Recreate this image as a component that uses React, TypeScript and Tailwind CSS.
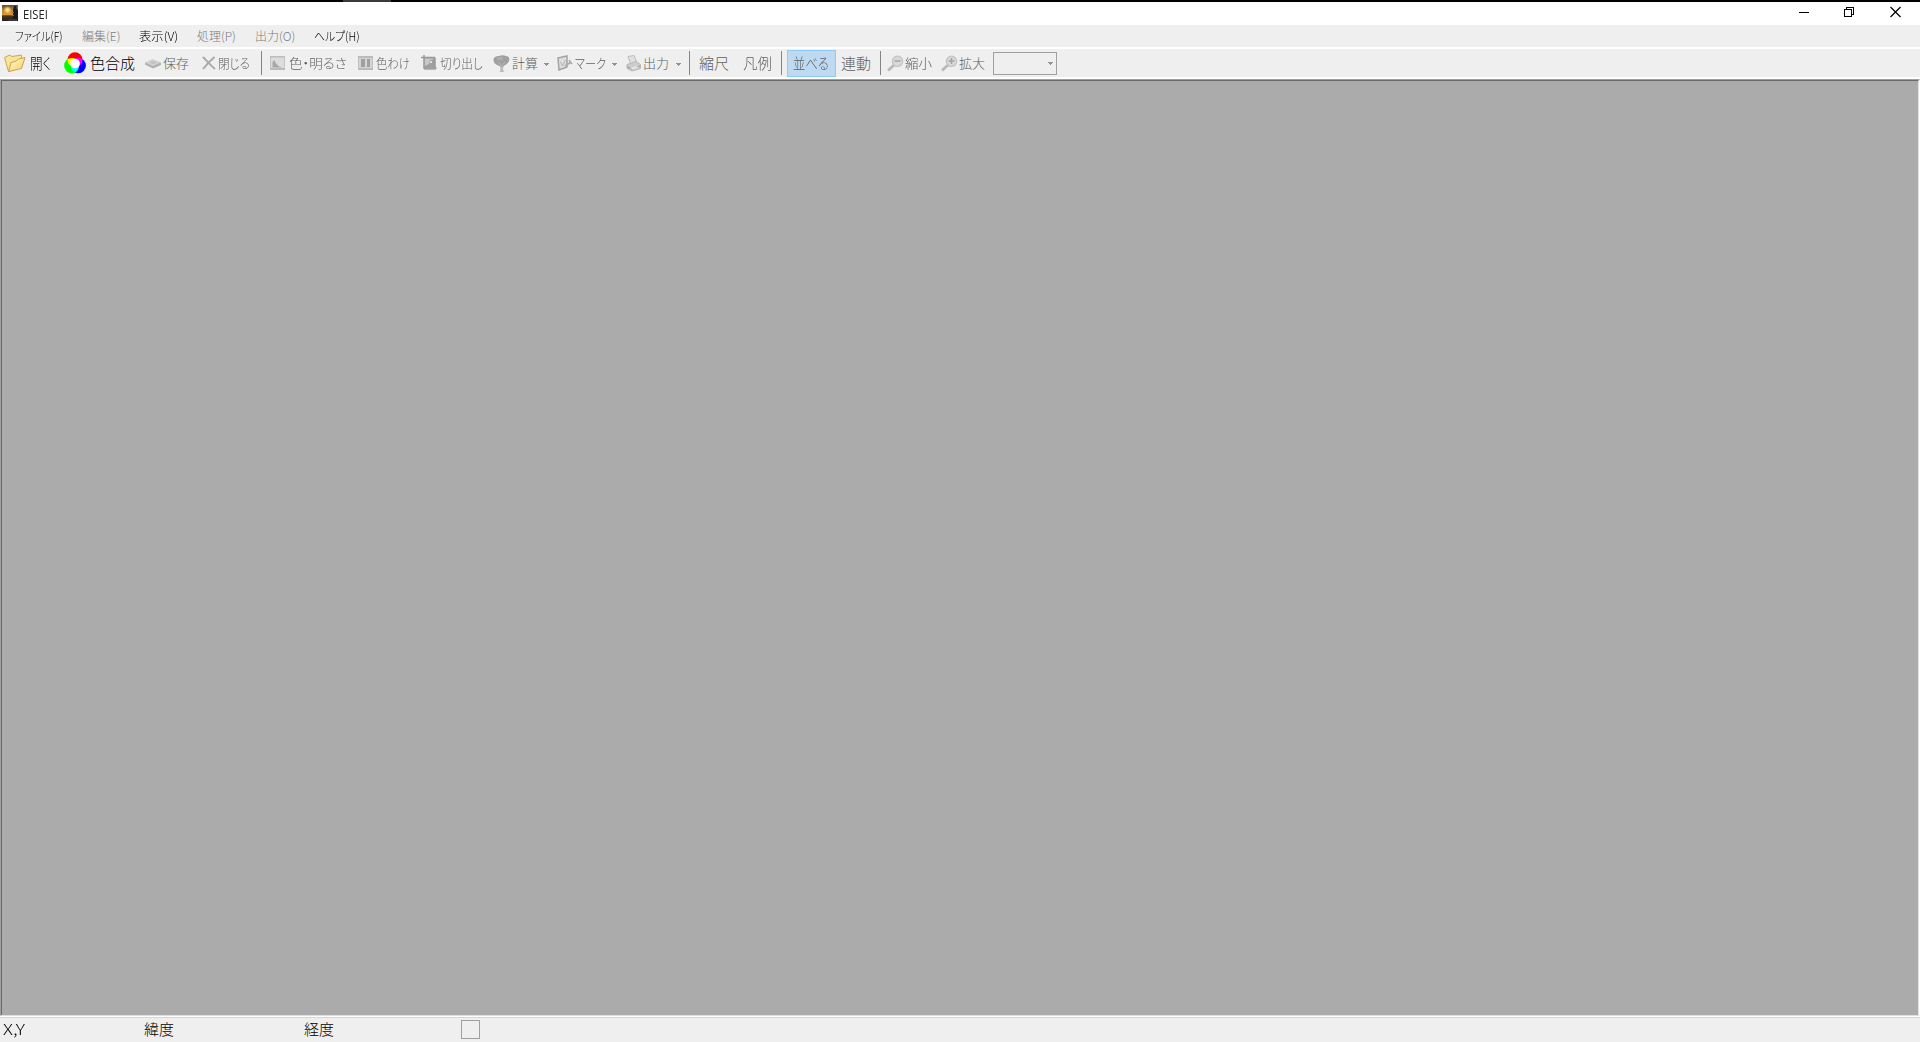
import React, { useLayoutEffect, useRef, useState } from "react";

type FitTextProps = { text: string; className: string };

// Condenses proportional kana so that a label fills its own box exactly.
const FitText = ({ text, className }: FitTextProps) => {
  const ref = useRef<HTMLSpanElement>(null);
  const [scale, setScale] = useState(1);

  useLayoutEffect(() => {
    const el = ref.current;
    if (el && el.parentElement) {
      setScale(el.parentElement.clientWidth / el.offsetWidth);
    }
  }, [text]);

  return (
    <span className={`block shrink-0 whitespace-nowrap ${className}`}>
      <span ref={ref} className="inline-block origin-left" style={{ transform: `scaleX(${scale})` }}>
        {text}
      </span>
    </span>
  );
};

const AppIcon = () => (
  <svg width="16" height="16" viewBox="0 0 16 16">
    <defs>
      <linearGradient id="sky" x1="0" y1="0" x2="0" y2="1">
        <stop offset="0" stopColor="#5a4a38" />
        <stop offset=".35" stopColor="#c08a3c" />
        <stop offset=".6" stopColor="#d9983a" />
        <stop offset=".68" stopColor="#4a3420" />
        <stop offset="1" stopColor="#2a2018" />
      </linearGradient>
      <radialGradient id="sun">
        <stop offset="0" stopColor="#fff6c0" />
        <stop offset=".4" stopColor="#f8cf62" />
        <stop offset="1" stopColor="#f8cf62" stopOpacity="0" />
      </radialGradient>
    </defs>
    <path fill="url(#sky)" d="M0 0h16v16H0z" />
    <circle cx="5.500" cy="5" r="4" fill="url(#sun)" />
    <path fill="#1c1a1c" d="M12 1h2l1 3 1 1v11H8l1-2 2-1V5z" />
    <path fill="#33384a" d="M7 14h8v2H6z" />
    <path fill="#8a6436" d="M10 7h2v1h-2zM10 10h2v1h-2z" />
  </svg>
);

const FolderIcon = () => (
  <svg width="22" height="20" viewBox="0 0 22 20">
    <defs>
      <linearGradient id="folder" x1="0" y1="0" x2="1" y2="1">
        <stop offset="0" stopColor="#fffbd0" />
        <stop offset="1" stopColor="#f4d068" />
      </linearGradient>
    </defs>
    <path fill="#f7e39a" stroke="#d0a850" d="M.5 4.500l5-2.500 2.500 1.500 9.500-1.500v4l-2 9-11 3.500z" />
    <path fill="url(#folder)" stroke="#cda348" d="M4.500 18.500L7 9.500l5.500-1.500 2-2 6.500-1.500-3.500 11z" />
  </svg>
);

const RgbIcon = () => (
  <svg width="22" height="22" viewBox="0 0 22 22">
    <g className="isolate">
      <circle cx="11" cy="7.700" r="7.500" fill="#f00" />
      <circle cx="7.700" cy="13.600" r="7.600" fill="#0f0" className="mix-blend-screen" />
      <circle cx="14.300" cy="13.600" r="7.600" fill="#00f" className="mix-blend-screen" />
    </g>
    <circle cx="11" cy="11.500" r="4.800" fill="#fff" />
  </svg>
);

const DiskIcon = () => (
  <svg width="16" height="11" viewBox="0 0 16 11">
    <path fill="#b0b0b0" d="M0 4.500v2L8 10.500l8-3.500V4.500z" />
    <path fill="#d2d2d2" d="M0 4.500L7.500 1 16 4.200 8 8z" />
    <path fill="#c0c0c0" d="M4 4.500L8 3l4 1.400L8 6z" />
  </svg>
);

const CrossIcon = () => (
  <svg width="14" height="14" viewBox="0 0 14 14">
    <path stroke="#aaa" strokeWidth="2" fill="none" d="M1 1c3 3 7 8 12 12M12.500 1C9 4 5 8 1 13" />
  </svg>
);

const HistogramIcon = () => (
  <svg width="15" height="14" viewBox="0 0 15 14">
    <path fill="#dcdcdc" stroke="#c4c4c4" d="M.5.5h14v13H.5z" />
    <path fill="#bcbcbc" d="M0 0h15v1.500H0zM0 12h15v2H0z" />
    <path fill="#a8a8a8" d="M2.500 11.500V6l2-2c1 4 4 7 8.500 7.500z" />
  </svg>
);

const ClassesIcon = () => (
  <svg width="15" height="14" viewBox="0 0 15 14">
    <path fill="#d4d4d4" stroke="#c0c0c0" d="M.5.5h14v13H.5z" />
    <path fill="#bbb" d="M0 0h15v2H0zM0 12h15v2H0z" />
    <path fill="#a0a0a0" d="M3 3h4v8H3zM9 3h3v8H9z" />
  </svg>
);

const CropIcon = () => (
  <svg width="16" height="16" viewBox="0 0 16 16">
    <path fill="#b9b9b9" d="M3 3h12v12H3z" />
    <path fill="#c8c8c8" d="M4 4h8v7H4z" />
    <path fill="#a0a0a0" d="M4 11l4-2 1-4 4-1v8H4z" />
    <path stroke="#999" strokeWidth="1.500" fill="none" d="M0 2.500h13.500V13M3 0v13h12.500" />
    <path fill="#dedede" d="M9 6h2v2H9z" />
  </svg>
);

const TreeIcon = () => (
  <svg width="17" height="17" viewBox="0 0 17 17">
    <path fill="#bdbdbd" d="M6.500 7h4.500l-1 8 1.500 2h-5L7.500 15z" />
    <path fill="#a0a0a0" d="M.5 5C.5 2 3 1 6 1c2-1 5-1 7 0 3 0 4 3 3 5s-3 4-5.500 5l-2 1-2-1C3 10 .5 8 .5 5z" />
    <path stroke="#b8b8b8" d="M6 7l2.500 4L12 7" fill="none" />
    <path fill="#adadad" d="M4 2h6v3H4z" />
  </svg>
);

const MarkIcon = () => (
  <svg width="16" height="16" viewBox="0 0 16 16">
    <path fill="#dedede" stroke="#a4a4a4" strokeWidth="1.500" d="M1 3l9-2v11l-8 3z" />
    <path stroke="#b4b4b4" fill="none" d="M3.500 7l2 4 3-6" />
    <path stroke="#acacac" strokeWidth="2" d="M8 11l6-4" />
    <path stroke="#acacac" strokeWidth="1.500" d="M12 5l3 4" />
  </svg>
);

const PrinterIcon = () => (
  <svg width="15" height="17" viewBox="0 0 15 17">
    <path fill="#e0e0e0" stroke="#bdbdbd" d="M2 1.500l6-1 3 7-6 2z" />
    <path fill="#cdcdcd" stroke="#b8b8b8" d="M1 9.500l9-3 4.500 3v4L6 16l-5-2.500z" />
    <path fill="#a6a6a6" d="M1 11l5 2 8-2.500v1.500L6 14.500l-5-2z" />
    <path fill="#e4e4e4" d="M4 13l6-2 3 1.500-6 2z" />
  </svg>
);

const LensIcon = ({ plus }: { plus?: boolean }) => (
  <svg width="17" height="17" viewBox="0 0 17 17">
    <path stroke="#b8b8b8" strokeWidth="2.800" d="M1 15.500l6-5.500" />
    <circle cx="10.500" cy="6.300" r="5.200" fill="#d8d8d8" stroke="#c2c2c2" strokeWidth="1.200" />
    <path stroke="#a4a4a4" strokeWidth="1.500" d={plus ? "M7.500 6h6M10.500 3v6" : "M7.500 6h6"} />
  </svg>
);

const Arrow = ({ className }: { className: string }) => (
  <svg width="5" height="3" viewBox="0 0 5 3" shapeRendering="crispEdges" className={`shrink-0 ${className}`}>
    <path fill="#929292" d="M0 0h5v1H4v1H3v1H2V2H1V1H0z" />
  </svg>
);

const Separator = ({ className }: { className: string }) => (
  <div className={`h-6 w-px shrink-0 bg-[#858585] ${className}`} />
);

type ToolProps = { icon?: React.ReactNode; className: string; iconClass?: string; text: string; textClass: string };

const Tool = ({ icon, className, iconClass = "", text, textClass }: ToolProps) => (
  <div className={`flex shrink-0 items-center ${className}`}>
    {icon && <div className={`shrink-0 ${iconClass}`}>{icon}</div>}
    <FitText text={text} className={textClass} />
  </div>
);

const menus = [
  { text: "ファイル(F)", className: "ml-[15px] w-12 text-black" },
  { text: "編集(E)", className: "ml-[19px] w-[38px] text-[#7c7c7c]" },
  { text: "表示(V)", className: "ml-[19px] w-[39px] text-black" },
  { text: "処理(P)", className: "ml-[19px] w-[39px] text-[#7c7c7c]" },
  { text: "出力(O)", className: "ml-[19px] w-10 text-[#7c7c7c]" },
  { text: "ヘルプ(H)", className: "ml-[19px] w-[46px] text-black" },
];

const App = () => {
  return (
    <div className="flex h-[1042px] w-[1920px] flex-col overflow-hidden bg-[#efefef] font-['Noto_Sans_CJK_JP',sans-serif] font-light">
      <div className="h-0.5 shrink-0 bg-black">
        <div className="ml-[343px] h-0.5 w-12 bg-[#3a3a3a]" />
      </div>

      <header className="flex h-[23px] shrink-0 items-start bg-white">
        <div className="ml-0.5 mt-[3px]">
          <AppIcon />
        </div>
        <FitText text="EISEI" className="ml-[5px] mt-1 w-[25px] font-['Open_Sans',sans-serif] text-[13px] font-normal leading-4 text-[#222]" />
        <svg width="103" height="12" viewBox="0 0 103 12" className="ml-auto mr-[18px] mt-1" fill="none" stroke="#000">
          <path d="M0 6.500h10M45.500 3.500h7v7h-7zM47.500 3V1.500h7v7H53" shapeRendering="crispEdges" />
          <path d="M91.500 1l10 10M101.500 1l-10 10" strokeWidth="1.200" />
        </svg>
      </header>

      <nav className="flex h-[22px] shrink-0 items-center text-xs leading-4 [font-feature-settings:'palt']">
        {menus.map((menu) => (
          <FitText key={menu.text} text={menu.text} className={menu.className} />
        ))}
      </nav>
      <div className="h-0.5 shrink-0 bg-white" />

      <div className="flex h-7 shrink-0 items-center text-[13px] leading-5 text-[#606060] [font-feature-settings:'palt']">
        <Tool icon={<FolderIcon />} className="ml-1 w-[60px]" iconClass="w-[26px]" text="開く" textClass="w-[21px] text-[15px] text-black" />
        <Tool icon={<RgbIcon />} className="w-[81px]" iconClass="w-[26px]" text="色合成" textClass="w-[45px] text-[15px] text-black" />
        <Tool icon={<DiskIcon />} className="w-[57px]" iconClass="w-[18px]" text="保存" textClass="w-[26px]" />
        <Tool icon={<CrossIcon />} className="w-[59px]" iconClass="w-[16px]" text="閉じる" textClass="w-8" />
        <Separator className="" />
        <Tool icon={<HistogramIcon />} className="ml-2 w-[88px]" iconClass="w-[19px]" text="色・明るさ" textClass="w-[58px]" />
        <Tool icon={<ClassesIcon />} className="w-[63px]" iconClass="w-[18px]" text="色わけ" textClass="w-[34px]" />
        <Tool icon={<CropIcon />} className="w-[72px]" iconClass="w-[19px]" text="切り出し" textClass="w-[43px]" />
        <Tool icon={<TreeIcon />} className="w-[45px]" iconClass="w-[19px]" text="計算" textClass="w-[26px]" />
        <Arrow className="ml-1.5 mt-0.5" />
        <Tool icon={<MarkIcon />} className="ml-2 w-[50px]" iconClass="w-[18px]" text="マーク" textClass="w-[31px]" />
        <Arrow className="ml-[5px] mt-0.5" />
        <Tool icon={<PrinterIcon />} className="ml-[9px] w-[44px]" iconClass="w-[17px]" text="出力" textClass="w-[26px]" />
        <Arrow className="ml-1.5 mt-0.5" />
        <Separator className="ml-2" />
        <Tool className="ml-[9px] w-[44px]" text="縮尺" textClass="w-[30px] text-[15px]" />
        <Tool className="w-[38px]" text="凡例" textClass="w-[29px] text-[15px]" />
        <Separator className="" />
        <button className="ml-[5px] flex h-[27px] w-[49px] shrink-0 items-center border border-[#90c8f6] bg-[#bedaf2] pl-[5px]">
          <FitText text="並べる" className="w-9 text-left text-[15px] leading-5" />
        </button>
        <Tool className="ml-[5px] w-[39px]" text="連動" textClass="w-[30px] text-[15px]" />
        <Separator className="" />
        <Tool icon={<LensIcon />} className="ml-1.5 w-[54px]" iconClass="w-[18px]" text="縮小" textClass="w-[27px]" />
        <Tool icon={<LensIcon plus />} className="w-[52px]" iconClass="w-[18px]" text="拡大" textClass="w-[26px]" />
        <div className="flex h-[23px] w-16 shrink-0 items-center justify-end border border-[#a0a0a0] pr-[3px]">
          <Arrow className="" />
        </div>
      </div>

      <div className="h-0.5 shrink-0 bg-white" />
      <main className="flex h-[937px] shrink-0 flex-col border border-b-[#dedede] border-l-[#a0a0a0] border-r-white border-t-[#a0a0a0]">
        <div className="grow border-l border-r border-t border-l-[#696969] border-r-[#e3e3e3] border-t-[#696969] bg-[#ababab]" />
      </main>
      <div className="h-px shrink-0 bg-white" />
      <div className="h-px shrink-0 bg-[#d7d7d7]" />

      <footer className="flex grow items-center pb-0.5 text-[15px] leading-5 text-black">
        <FitText text="X,Y" className="ml-[3px] w-[22px]" />
        <FitText text="緯度" className="ml-[119px] w-[30px]" />
        <FitText text="経度" className="ml-[130px] w-[30px]" />
        <div className="ml-[127px] h-[19px] w-[19px] border border-[#a0a0a0]" />
      </footer>
    </div>
  );
};

export default App;
